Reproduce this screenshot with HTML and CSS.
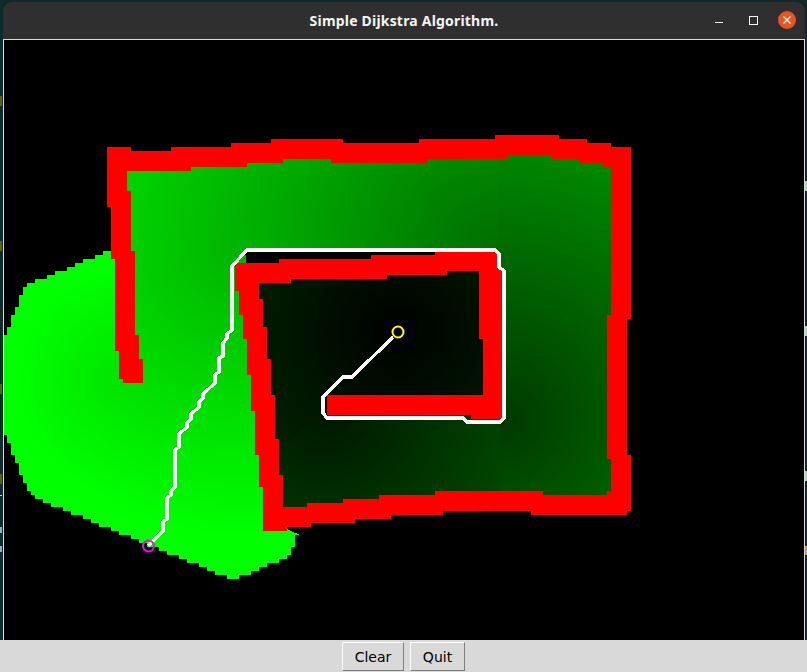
FILE: index.html
```html
<!DOCTYPE html>
<html lang="en">
<head>
<meta charset="utf-8">
<title>Simple Dijkstra Algorithm.</title>
<link rel="stylesheet" href="styles.css">
</head>
<body>
<div class="window">
  <header class="titlebar">
    <h1 class="title">Simple Dijkstra Algorithm.</h1>
    <div class="controls">
      <svg class="ctl-icon" width="16" height="16" viewBox="0 0 16 16"><path class="ctl-line" d="M4 10.5h8"/></svg>
      <svg class="ctl-icon ctl-max" width="16" height="16" viewBox="0 0 16 16"><rect class="ctl-line" x="4.5" y="4.5" width="8" height="8"/></svg>
      <svg class="ctl-close" width="18" height="18" viewBox="0 0 18 18"><circle class="close-bg" cx="9" cy="9" r="9"/><path class="close-x" d="M5.5 5.5l7 7M12.5 5.5l-7 7"/></svg>
    </div>
  </header>
  <main class="body">
    <svg class="board" width="800" height="600" viewBox="4 40 800 600" role="img" aria-label="Dijkstra search field">
      <defs>
        <radialGradient id="gTop" gradientUnits="userSpaceOnUse" cx="497" cy="250" r="400"><stop offset="0" stop-color="#006e00"/><stop offset="1" stop-color="#00da00"/></radialGradient>
        <radialGradient id="gRight" gradientUnits="userSpaceOnUse" cx="500" cy="420" r="400"><stop offset="0" stop-color="#003800"/><stop offset="1" stop-color="#00ae00"/></radialGradient>
        <radialGradient id="gLeft" gradientUnits="userSpaceOnUse" cx="245" cy="250" r="285"><stop offset="0" stop-color="#00b200"/><stop offset="1" stop-color="#00ff00"/></radialGradient>
        <radialGradient id="gFar" gradientUnits="userSpaceOnUse" cx="130" cy="382" r="111"><stop offset="0" stop-color="#00e100"/><stop offset="1" stop-color="#00ff00"/></radialGradient>
        <radialGradient id="gRoom" gradientUnits="userSpaceOnUse" cx="398" cy="332" r="200"><stop offset="0" stop-color="#000000"/><stop offset="1" stop-color="#002800"/></radialGradient>
        <radialGradient id="gUnder" gradientUnits="userSpaceOnUse" cx="325" cy="405" r="300"><stop offset="0" stop-color="#001500"/><stop offset="1" stop-color="#006200"/></radialGradient>
        <clipPath id="field">
          <polygon points="115,259 111,259 111,251 103,251 103,255 95,255 95,259 83,259 83,263 75,263 75,267 67,267 67,271 55,271 55,275 47,275 47,279 35,279 35,283 27,283 27,287 23,287 23,295 19,295 19,307 15,307 15,315 11,315 11,327 7,327 7,335 4,335 4,435 7,435 7,443 11,443 11,455 15,455 15,463 19,463 19,475 23,475 23,483 27,483 27,491 31,491 31,495 35,495 35,499 43,499 43,503 51,503 51,507 63,507 63,511 71,511 71,515 83,515 83,519 91,519 91,523 99,523 99,527 111,527 111,531 119,531 119,535 131,535 131,539 139,539 139,543 147,543 147,547 159,547 159,551 167,551 167,555 179,555 179,559 187,559 187,563 199,563 199,567 207,567 207,571 215,571 215,575 227,575 227,579 239,579 239,575 251,575 251,571 259,571 259,567 267,567 267,563 279,563 279,559 287,559 287,555 291,555 291,547 295,547 295,535 299,535 299,531 295,531 295,527 287,527 265,440 245,260 125,260"/>
          <polygon points="120,160 230,155 300,150 520,148 600,155 620,160 620,505 300,520 275,520 265,440 250,300 245,270 125,270"/>
        </clipPath>
      </defs>
      <g class="zones" clip-path="url(#field)">
        <polygon fill="url(#gTop)" points="0,0 498,0 498,250 0,250"/>
        <polygon fill="url(#gRight)" points="498,0 807,0 807,640 498,640"/>
        <polygon fill="url(#gLeft)" points="120,250 245,250 250,300 265,440 278,525 300,535 300,640 0,640 0,531 130,382"/>
        <polygon fill="url(#gFar)" points="0,250 120,250 130,382 0,531"/>
        <polygon fill="url(#gRoom)" points="250,268 500,255 500,405 325,405 270,460"/>
        <polygon fill="url(#gUnder)" points="325,405 500,405 500,520 272,520 270,460"/>
      </g>
      <polygon class="wall" points="107,147 131,147 131,151 171,151 171,147 231,147 231,143 271,143 271,139 343,139 343,143 419,143 419,139 495,139 495,135 559,135 559,139 587,139 587,143 611,143 611,147 631,147 631,319 627,319 627,455 631,455 631,511 627,511 627,515 531,515 531,511 443,511 443,515 391,515 391,519 355,519 355,523 311,523 311,527 287,527 287,531 263,531 263,487 259,487 259,455 255,455 255,411 251,411 251,375 247,375 247,339 243,339 243,315 239,315 239,291 235,291 235,263 279,263 279,259 371,259 371,255 435,255 435,251 498,251 498,268 502,268 502,419 471,419 471,415 327,415 327,395 483,395 483,339 479,339 479,271 447,271 447,275 387,275 387,279 291,279 291,283 259,283 259,299 263,299 263,327 267,327 267,359 271,359 271,395 275,395 275,439 279,439 279,475 283,475 283,507 307,507 307,503 343,503 343,499 379,499 379,495 435,495 435,491 543,491 543,495 607,495 607,491 611,491 611,459 607,459 607,315 611,315 611,167 603,167 603,163 579,163 579,159 551,159 551,155 507,155 507,159 427,159 427,163 331,163 331,159 283,159 283,163 247,163 247,167 191,167 191,171 127,171 127,191 131,191 131,251 135,251 135,335 139,335 139,359 143,359 143,383 123,383 123,379 119,379 119,351 115,351 115,259 111,259 111,207 107,207"/>
      <polyline class="route" points="393,337 352,377 343,377 323,397 323,413 327,418 463,418 467,422 500,422 504,418 504,271 499,267 499,254 495,250 247,250 232,266 232,330 227,334 227,338 223,343 223,356 219,358 219,372 215,375 215,383 203,394 203,398 199,402 199,407 191,414 191,419 187,423 187,427 179,434 179,447 175,450 175,487 171,491 171,495 167,498 167,519 163,522 163,531 148,546"/>
      <circle class="start" cx="398" cy="332" r="5.5"/>
      <circle class="goal" cx="148.5" cy="546" r="5.5"/>
    </svg>
  </main>
  <footer class="actions">
    <button class="btn btn-clear" type="button">Clear</button>
    <button class="btn btn-quit" type="button">Quit</button>
  </footer>
</div>
</body>
</html>
```

FILE: styles.css
```css
* { box-sizing: border-box; }
html, body { margin: 0; height: 100%; }
body {
  overflow: hidden;
  background-color: #0f2a2b;
  background-repeat: no-repeat;
  background-image:
    linear-gradient(#55660f, #55660f), linear-gradient(#55660f, #55660f),
    linear-gradient(#55660f, #55660f), linear-gradient(#55660f, #55660f),
    linear-gradient(#cfcfcf, #cfcfcf), linear-gradient(#8fb0c0, #8fb0c0),
    linear-gradient(#8fb0c0, #8fb0c0),
    linear-gradient(#a8dcc8, #a8dcc8), linear-gradient(#a8dcc8, #a8dcc8),
    linear-gradient(#a8dcc8, #a8dcc8), linear-gradient(#d89050, #d89050);
  background-size:
    2px 10px, 2px 10px, 2px 10px, 2px 10px, 2px 1px, 2px 6px, 2px 6px,
    2px 10px, 2px 10px, 2px 10px, 2px 9px;
  background-position:
    0 96px, 0 241px, 0 384px, 0 474px, 0 495px, 0 527px, 0 546px,
    805px 181px, 805px 326px, 805px 471px, 805px 546px;
}
.window {
  margin: 2px 2px 0 3px;
  height: 670px;
  display: flex;
  flex-direction: column;
}
.titlebar {
  height: 37px;
  flex: none;
  background: #2f2f2f;
  border-radius: 9px 9px 0 0;
  display: flex;
  align-items: center;
  justify-content: center;
  position: relative;
}
.title {
  margin: 0 0 1px;
  color: #f4f4f4;
  font: 700 14px "Noto Sans", sans-serif;
  letter-spacing: 0.2px;
}
.controls {
  position: absolute;
  right: 9px;
  top: 9px;
  display: flex;
  align-items: center;
  gap: 18px;
}
.ctl-icon { display: block; }
.ctl-max { margin-right: -1px; }
.ctl-close { display: block; }
.ctl-line { fill: none; stroke: #f4f4f4; stroke-width: 1; }
.close-bg { fill: #e95420; }
.close-x { fill: none; stroke: #ffffff; stroke-width: 1.4; }
.body {
  flex: none;
  height: 601px;
  border: 1px solid #d9d9d9;
  border-bottom: 0;
  background: #000;
  line-height: 0;
}
.board { display: block; background: #000; }
.zones polygon { shape-rendering: crispEdges; }
.wall { fill: #ff0000; shape-rendering: crispEdges; }
.route { fill: none; stroke: #ffffff; stroke-width: 3.4; shape-rendering: crispEdges; stroke-linejoin: miter; }
.start { fill: none; stroke: #ffff00; stroke-width: 2; }
.goal { fill: none; stroke: #ff00ff; stroke-width: 2; }
.actions {
  flex: 1;
  margin: 0 -2px 0 -3px;
  background: #d9d9d9;
  display: flex;
  justify-content: center;
  gap: 6px;
  padding: 2px 0 0 0;
}
.btn {
  height: 29px;
  padding: 0;
  background: #d9d9d9;
  color: #000;
  font: 14px "DejaVu Sans", sans-serif;
  border: 1px solid;
  border-color: #ffffff #7f7f7f #7f7f7f #ffffff;
  border-radius: 0;
}
.btn-clear { width: 62px; }
.btn-quit { width: 55px; }
```
